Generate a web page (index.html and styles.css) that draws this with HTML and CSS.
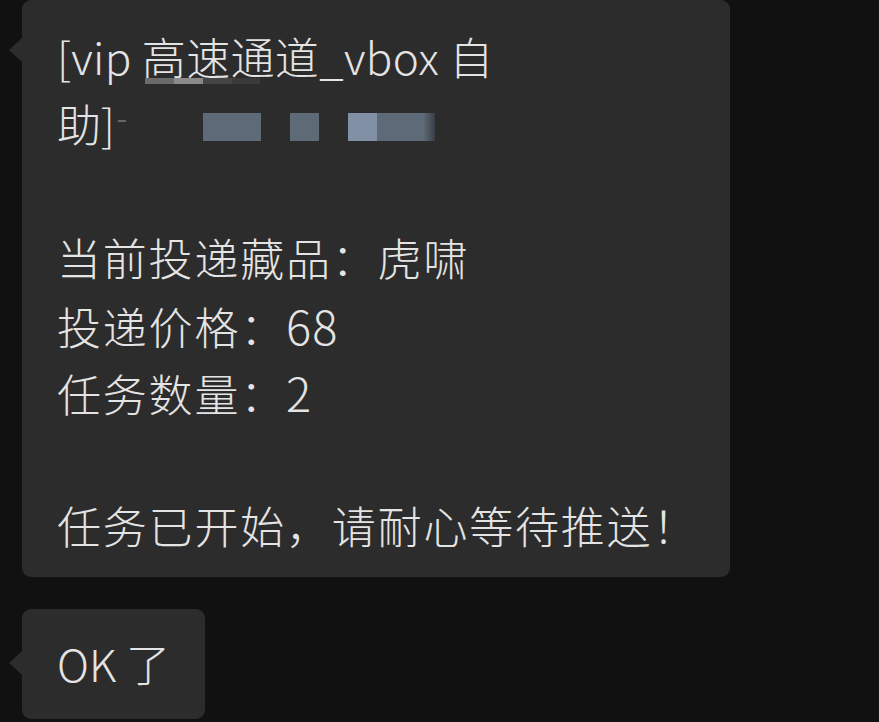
FILE: index.html
```html
<!DOCTYPE html>
<html lang="zh-CN">
<head>
<meta charset="utf-8">
<title>chat</title>
<link rel="stylesheet" href="styles.css">
</head>
<body>
<div class="chat">
  <div class="bubble bubble-main">
    <div class="line first">[vip 高速通道_vbox 自</div>
    <div class="line">助]</div>
    <div class="line"></div>
    <div class="line cjk">当前投递藏品：虎啸</div>
    <div class="line cjk">投递价格：<span class="num">68</span></div>
    <div class="line cjk">任务数量：<span class="num">2</span></div>
    <div class="line"></div>
    <div class="line cjk">任务已开始，请耐心等待推送！</div>
    <span class="mask m1"></span>
    <span class="mask m2"></span>
    <span class="mask m3"></span>
    <span class="mask m4"></span>
    <span class="mask m5"></span>
    <span class="mask m6"></span>
    <span class="mask m7"></span>
    <span class="mask m8"></span>
    <span class="mask m9"></span>
  </div>
  <div class="bubble bubble-small">
    <div class="line">OK 了</div>
  </div>
</div>
</body>
</html>
```

FILE: styles.css
```css
html, body {
  margin: 0;
  padding: 0;
  background: #111111;
  width: 879px;
  height: 722px;
  overflow: hidden;
}
.chat {
  display: flex;
  flex-direction: column;
  align-items: flex-start;
  gap: 32px;
  padding-left: 22px;
  font-family: "Noto Sans CJK SC", "Noto Sans", sans-serif;
  font-weight: 300;
  color: #e4e4e4;
  font-size: 44px;
  line-height: 67px;
}
.bubble {
  position: relative;
  background: #2c2c2c;
  border-radius: 9px;
  box-sizing: border-box;
}
.bubble::before {
  content: "";
  position: absolute;
  left: -13px;
  width: 0;
  height: 0;
  border-right: 13px solid #2c2c2c;
  border-top: 12px solid transparent;
  border-bottom: 12px solid transparent;
}
.bubble-main {
  width: 708px;
  padding: 23px 35px 18px;
}
.bubble-main::before { top: 38px; }
.bubble-small {
  padding: 21px 35px 22px 35px;
}
.bubble-small::before { top: 42px; }
.line {
  height: 67px;
  white-space: nowrap;
}
.first {
  letter-spacing: 0.35px;
}
.cjk {
  letter-spacing: 1.8px;
}
.num {
  font-size: 47px;
  letter-spacing: 1px;
}
.mask {
  position: absolute;
  display: block;
}
.m1 { left: 123px; top: 78px; width: 29px; height: 6px; background: #6a6a6a; }
.m2 { left: 152px; top: 78px; width: 29px; height: 6px; background: #8a8a8a; }
.m3 { left: 181px; top: 78px; width: 29px; height: 6px; background: #454545; }
.m4 { left: 210px; top: 78px; width: 28px; height: 6px; background: #3a3a3a; }
.m5 { left: 96px; top: 120px; width: 8px; height: 2px; background: #666; }
.m6 { left: 181px; top: 113px; width: 58px; height: 28px; background: #5e6a78; }
.m7 { left: 268px; top: 113px; width: 29px; height: 28px; background: #5f6a77; }
.m8 { left: 326px; top: 113px; width: 29px; height: 28px; background: #8190a5; }
.m9 { left: 355px; top: 113px; width: 58px; height: 28px; background: linear-gradient(to right, #5e6a78 80%, #3a3e44); }
```
